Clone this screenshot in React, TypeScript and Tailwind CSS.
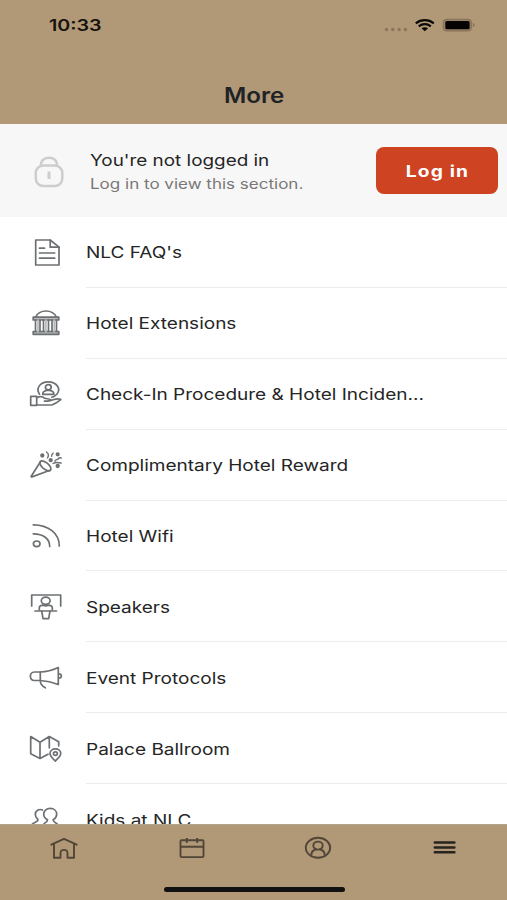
import type { ReactNode } from "react";

const items: { label: string; icon: ReactNode }[] = [
  {
    label: "NLC FAQ's",
    icon: (
      <>
        <path d="M7.7 6h14.5L31 13.2V31H7.7z" />
        <path d="M22.2 6v7.2H31M11.5 14.2h5M11.5 19h15.2M11.5 24.2h15.2" />
      </>
    ),
  },
  {
    label: "Hotel Extensions",
    icon: (
      <>
        <path d="M7.7 12C9.5 8 13.5 6 18 6s8.5 2 10.3 6" />
        <path d="M5.2 12.2h25.6V15H5.2zM5.2 26.5h25.6v2.8H5.2z" fill="#b9bbbd" />
        <path d="M10 15v11.5M17.9 15v11.5M26.2 15v11.5" stroke="#b9bbbd" />
        <path d="M7.5 15v11.5M28.5 15v11.5M12 15v11.5M15.5 15v11.5M20.5 15v11.5M24 15v11.5" />
      </>
    ),
  },
  {
    label: "Check-In Procedure & Hotel Inciden...",
    icon: (
      <>
        <path d="M11.5 18.2C7.5 12.5 12 5.8 20.3 5.8S33.5 13 28.8 18.2c-1.3 1.5-3 2.5-5 3" />
        <ellipse cx="20.3" cy="11.3" rx="2.9" ry="2.6" />
        <path d="M14.7 18.3c0-2.6 1.5-3.5 4-4h3.2c2.5.5 4 1.4 4 4z" />
        <path d="M2.7 20.3h6v9h-6z" />
        <path d="M8.7 21.5c4-1.7 6-1.2 8 .8 1.5.7 5 .2 5.8 1.5.3 1.200-2 1.400-6 1.400M22.5 24.500c4-1.600 8-2.300 10.300-.9-3 2.400-6 4.300-9 5.400H8.700" />
      </>
    ),
  },
  {
    label: "Complimentary Hotel Reward",
    icon: (
      <>
        <path d="M12.5 14.8L3.2 29.3c-.2.5.2.8.8.6l18-6.7" />
        <ellipse cx="17.4" cy="18.9" rx="6.7" ry="3.2" transform="rotate(40 17.4 18.9)" />
        <path d="M18.5 5c2 1.500 2.500 3.600 1 6M25.200 6.200c-1.200.8-1.700 2-1.600 3.200M27 14.200c.5-2.200 2.200-1 3.200-2.400.8-1 1.700-1.200 3-.8M25 16.500c3-1.800 5-1.200 8.200-.4" strokeWidth="1.4" />
        <g fill="#6d7072">
          <circle cx="14.3" cy="8.5" r="1.3" />
          <circle cx="29.7" cy="7.3" r="1.3" />
          <circle cx="22.7" cy="13.2" r="1.3" />
          <circle cx="29.7" cy="19" r="1.3" />
        </g>
      </>
    ),
  },
  {
    label: "Hotel Wifi",
    icon: (
      <>
        <ellipse cx="8.7" cy="25.8" rx="3.3" ry="2.8" />
        <path d="M5.3 15.8c10 0 16.4 5 16.4 12.7M5.3 6.8C20.5 6.8 31.3 15.5 31.3 28" />
      </>
    ),
  },
  {
    label: "Speakers",
    icon: (
      <>
        <path d="M3.7 17V6h29v11M7 22h21.5" />
        <ellipse cx="17.7" cy="11.7" rx="4.4" ry="3.6" />
        <path d="M11.3 21v-2.100c0-2 2-2.700 4.200-2.700 1.500.9 3 .9 4.500 0 2.200 0 4.300.7 4.300 2.700V21M13.700 22l1.300 7.700h5.700L22 22" />
      </>
    ),
  },
  {
    label: "Event Protocols",
    icon: (
      <>
        <path d="M12.3 12H6.5C1 12 1 20.5 6.5 20.5h5.8c6 .2 12 1.5 18 4V7.500c-6 2.800-12 4.300-18 4.500z" />
        <path d="M12.3 12v8.500c0 3.300 1.700 5.700 5 7.300M30.800 13.800c3.400 0 3.400 4.400 0 4.400" />
      </>
    ),
  },
  {
    label: "Palace Ballroom",
    icon: (
      <>
        <path d="M20 23.2l-8 4.300-9.300-4.700V5.600l9.300 5.600 9.300-5.600 9.400 5.200v4M12 11.200v16.300M21.300 5.600v11.200" />
        <path d="M27.3 30c-3-2.700-5.300-4.900-5.300-7.400 0-6.200 10.800-6.200 10.800 0 0 2.500-2.500 4.700-5.500 7.400z" />
        <ellipse cx="27.4" cy="22.6" rx="2" ry="1.7" />
      </>
    ),
  },
  {
    label: "Kids at NLC",
    icon: (
      <>
        <path d="M14.5 8C11 6.500 7.300 8.800 7.300 12.500c0 2.400 1.300 3.500 2.700 5 .8 2.500-4.500 2.500-6.500 5.500" />
        <path d="M15.300 23c.7-2.500 4.500-2.500 4.200-5.200-2.400-1.300-3.800-3.300-3.800-5.500 0-3.500 2.800-5.900 6.500-5.900s6.500 2.400 6.500 5.900c0 2.200-1.400 4.200-3.500 5.500-.3 2.700 3.500 2.700 4.800 5.200" />
      </>
    ),
  },
];

function StatusBar() {
  return (
    <div className="flex h-12 items-center justify-between pl-[49px] pr-[31px] pt-px">
      <span className="origin-left scale-x-[1.23] text-base font-semibold leading-none text-[#17120d]">
        10:33
      </span>
      <svg className="h-5 w-[92px]" viewBox="0 0 92 20">
        <g fill="#8b765d">
          <circle cx="2.5" cy="14.5" r="1.7" />
          <circle cx="8.8" cy="14.5" r="1.7" />
          <circle cx="15.1" cy="14.5" r="1.7" />
          <circle cx="21.4" cy="14.5" r="1.7" />
        </g>
        <g fill="none" stroke="#0c0a08" strokeWidth="2.2">
          <path d="M31.8 8.300c5-4.200 13-4.200 18 0" />
          <path d="M34.8 11.300c3.500-2.900 8.500-2.900 12 0" />
        </g>
        <path d="M37.5 13.300c2-1.500 4.600-1.500 6.600 0l-3.300 2.900z" fill="#0c0a08" />
        <rect x="59.3" y="4.3" width="28" height="11.600" rx="3.5" fill="#9a8467" stroke="#88745b" strokeWidth="1.2" />
        <rect x="61.3" y="5.900" width="24.300" height="8.400" rx="1.5" fill="#050403" />
        <path d="M88.8 8c2.600.8 2.600 3.200 0 4z" fill="#88745b" />
      </svg>
    </div>
  );
}

function LoginBanner() {
  return (
    <section className="flex h-[93px] shrink-0 items-center bg-[#f7f7f7] pl-[31px] pr-[9px]">
      <svg className="h-9 w-9 shrink-0" viewBox="0 0 36 36" fill="none" stroke="#cdcdcd" strokeWidth="2.5">
        <path d="M10 13v-1.200c0-9.300 16-9.300 16 0V13" />
        <rect x="4.800" y="12.500" width="26.500" height="20.500" rx="7.500" />
        <path d="M18 18.500v7.500" strokeWidth="3" />
      </svg>
      <div className="ml-[23px] flex-1 whitespace-nowrap pt-0.5">
        <p className="origin-left scale-x-[1.18] text-base leading-6 text-[#242424]">You're not logged in</p>
        <p className="origin-left scale-x-[1.215] text-sm leading-6 text-[#777]">Log in to view this section.</p>
      </div>
      <button className="h-[47px] w-[122px] rounded-lg bg-[#ce4321] text-base font-bold text-white">
        <span className="inline-block scale-x-[1.2] tracking-[0.06em]">Log in</span>
      </button>
    </section>
  );
}

function TabBar() {
  return (
    <footer className="relative h-[76.5px] shrink-0 border-t border-[#b5a48c] bg-[#b19978]">
      <nav className="grid grid-cols-4 justify-items-center pt-[7px]">
        <button aria-label="Home">
          <svg className="h-8 w-8" viewBox="0 0 32 32" fill="none" stroke="#514638" strokeWidth="1.9" strokeLinejoin="round" strokeLinecap="round">
            <path d="M4.300 12.700L17 6.800l12.700 5.900M7 11.700v14h6.500v-4.500c0-4.500 7-4.500 7 0v4.500H27v-14" />
          </svg>
        </button>
        <button aria-label="Calendar">
          <svg className="h-8 w-8" viewBox="0 0 32 32" fill="none" stroke="#514638" strokeWidth="1.9" strokeLinejoin="round">
            <rect x="6.5" y="8.3" width="23" height="16.8" rx="1" />
            <path d="M6.5 14.800h23M12.800 6v5M23.200 6v5" />
          </svg>
        </button>
        <button aria-label="Profile">
          <svg className="h-8 w-8" viewBox="0 0 32 32" fill="none" stroke="#514638" strokeWidth="1.9">
            <ellipse cx="17" cy="15.8" rx="12.2" ry="10" />
            <ellipse cx="17" cy="13.6" rx="4.7" ry="4" />
            <path d="M10.300 23.500c0-3.500 2.500-5.700 5-6.200M23.700 23.500c0-3.500-2.500-5.700-5-6.200" />
          </svg>
        </button>
        <button aria-label="More">
          <svg className="h-8 w-8" viewBox="0 0 32 32" fill="none" stroke="#27231f" strokeWidth="2.5" strokeLinecap="round">
            <path d="M6.800 10.500h19.600M6.800 15.500h19.600M6.800 20.300h19.600" />
          </svg>
        </button>
      </nav>
      <div className="absolute bottom-2 left-[164px] h-[5px] w-[181px] rounded-full bg-[#111]" />
    </footer>
  );
}

export default function App() {
  return (
    <div className="flex h-[900px] w-[507px] flex-col overflow-hidden bg-white font-['Inter',sans-serif]">
      <header className="h-[124px] shrink-0 bg-[#b19978]">
        <StatusBar />
        <h1 className="pl-px pt-[34px] text-center text-[21px] font-semibold leading-7 text-[#1e2326]">
          <span className="inline-block scale-x-[1.15]">More</span>
        </h1>
      </header>
      <LoginBanner />
      <ul className="min-h-0 flex-1 overflow-hidden">
        {items.map((item) => (
          <li key={item.label} className="flex h-[70.9px] items-center pl-7">
            <svg
              className="h-9 w-9 shrink-0"
              viewBox="0 0 36 36"
              fill="none"
              stroke="#6d7072"
              strokeWidth="1.7"
              strokeLinejoin="round"
              strokeLinecap="round"
            >
              {item.icon}
            </svg>
            <div className="ml-[22px] flex h-full flex-1 items-center border-b border-[#ececec] pt-px">
              <span className="origin-left scale-x-[1.188] whitespace-nowrap text-base text-[#252525]">
                {item.label}
              </span>
            </div>
          </li>
        ))}
      </ul>
      <TabBar />
    </div>
  );
}
